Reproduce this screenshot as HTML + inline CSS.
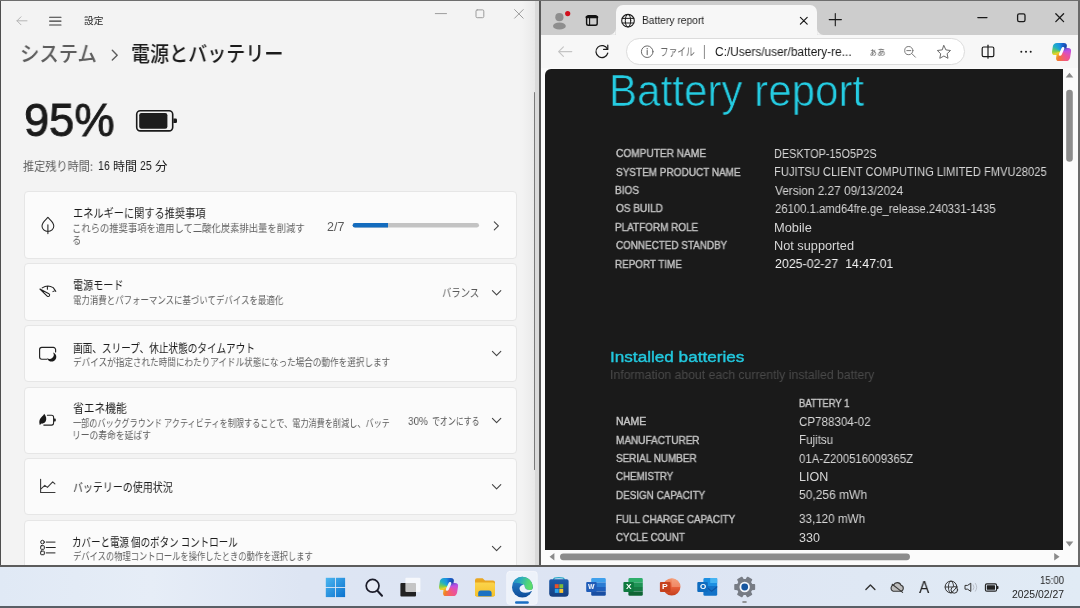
<!DOCTYPE html>
<html lang="ja">
<head>
<meta charset="utf-8">
<title>Battery report</title>
<style>
html,body{margin:0;padding:0}
body{width:1080px;height:608px;overflow:hidden;position:relative;background:#e3ebf5;font-family:"Liberation Sans","Noto Sans CJK JP",sans-serif}
.a{position:absolute}
.t{position:absolute;will-change:transform;white-space:nowrap;line-height:1;transform-origin:0 0;font-family:"Liberation Sans","Noto Sans CJK JP",sans-serif;font-weight:400}
.j{font-family:"Noto Sans CJK JP","Liberation Sans",sans-serif}
.l{font-weight:300}
.dl{font-weight:350}
.b{font-weight:700}
.sb{font-weight:400;-webkit-text-stroke:.4px currentColor}
.m{font-weight:500}
.cop{position:absolute;width:18.8px;height:17.6px;transform:skewX(-9deg)}
.cop b,.cop u{position:absolute;width:13.6px;height:12.4px;border-radius:3.6px}
.cop b{left:0;top:0;background:conic-gradient(from 0deg at 9.4px 8.8px,#1b62cc 0deg,#1746a8 35deg,#8a4fd8 62deg,#c350e0 85deg,#ea529e 125deg,#f4606a 160deg,#f07a2c 195deg,#f2b428 228deg,#e9d62a 248deg,#7ccc4e 275deg,#22b0c4 305deg,#1b92e2 335deg,#1b62cc 360deg)}
.cop u{left:5.2px;top:5.2px;background:conic-gradient(from 0deg at 4.2px 3.6px,#1b62cc 0deg,#1746a8 35deg,#8a4fd8 62deg,#c350e0 85deg,#ea529e 125deg,#f4606a 160deg,#f07a2c 195deg,#f2b428 228deg,#e9d62a 248deg,#7ccc4e 275deg,#22b0c4 305deg,#1b92e2 335deg,#1b62cc 360deg)}
.cop i{position:absolute;left:7.7px;top:4.2px;width:3.4px;height:9.2px;border-radius:1.7px;transform:rotate(16deg);background:#fbfcff}
svg{position:absolute;overflow:visible}
/* settings window */
#set{left:0;top:0;width:539px;height:566px;background:#f3f3f3}
.card{position:absolute;left:23.5px;width:493px;background:#fbfbfb;border:1px solid #e6e6e6;border-radius:4px;box-sizing:border-box}
/* edge window */
#edge{left:541px;top:0;width:539px;height:566px;background:#fbfbfb}
#tool{left:0;top:34.7px;width:539px;height:33.8px;background:#f7f7f7}
#tabbar{left:0;top:0;width:539px;height:34.7px;background:#cdcdcd}
#tab{left:74.6px;top:5.3px;width:201.6px;height:30px;background:#f7f7f7;border-radius:7px 7px 0 0}
#addr{left:84.6px;top:38.4px;width:339px;height:26.6px;background:#fff;border:1px solid #dcdcdc;border-radius:13.3px;box-sizing:border-box}
#page{left:4px;top:68.5px;width:517.7px;height:481px;background:#1a1a1a;border-radius:6px 0 0 0;overflow:hidden}
/* taskbar */
#task{left:0;top:567px;width:1080px;height:41px;background:linear-gradient(90deg,#e0e9f5 0%,#e6edf7 14%,#dde5f3 28%,#dde4f3 60%,#dfe8f4 80%,#e1ebf5 100%)}
</style>
</head>
<body>

<!-- ================= SETTINGS WINDOW ================= -->
<div id="set" class="a">
  <div class="card" style="top:191px;height:68px"></div>
  <div class="card" style="top:263px;height:58px"></div>
  <div class="card" style="top:324.5px;height:57.5px"></div>
  <div class="card" style="top:386.5px;height:67px"></div>
  <div class="card" style="top:457.5px;height:57px"></div>
  <div class="card" style="top:519.5px;height:60px"></div>
  <!-- scrollbar -->
  <div class="a" style="left:522px;top:0;width:13px;height:566px;background:linear-gradient(90deg,#f3f3f3,#e9e9e9)"></div>
  <div class="a" style="left:535px;top:0;width:4px;height:566px;background:#dadada"></div>
  <div class="a" style="left:533.5px;top:92px;width:1.7px;height:378px;background:#7a7a7a;border-radius:1px"></div>
</div>

<!-- settings icons -->
<svg class="a" style="left:0;top:0" width="540" height="567" viewBox="0 0 540 567" fill="none" stroke-linecap="round" stroke-linejoin="round">
  <!-- back arrow (disabled) -->
  <path d="M17 20.8H27M21 16.8L17 20.8L21 24.8" stroke="#b4b4b4" stroke-width="1"/>
  <!-- hamburger -->
  <path d="M49.6 17.2H61M49.6 21.1H61M49.6 25H61" stroke="#3a3a3a" stroke-width="1.1"/>
  <!-- window controls -->
  <path d="M435.3 13.6H446.5" stroke="#9c9c9c" stroke-width="1"/>
  <rect x="476" y="9.9" width="7.8" height="7.8" rx="1.2" stroke="#9c9c9c" stroke-width="1"/>
  <path d="M514.6 9.6L523.2 18.2M523.2 9.6L514.6 18.2" stroke="#9c9c9c" stroke-width="1"/>
  <!-- breadcrumb chevron -->
  <path d="M112.3 50.3L117.2 55.2L112.3 60.1" stroke="#5d5d5d" stroke-width="1.4"/>
  <!-- big battery -->
  <rect x="136.7" y="110.7" width="36" height="20.2" rx="3.6" stroke="#1a1a1a" stroke-width="1.6"/>
  <rect x="139.2" y="113.1" width="28.2" height="15.6" rx="2.2" fill="#1d1d1d"/>
  <path d="M173.4 118.6h2.4a1.2 1.2 0 0 1 1.2 1.2v2a1.2 1.2 0 0 1 -1.2 1.2h-2.4z" fill="#1a1a1a"/>
  <!-- progress bar -->
  <rect x="352.6" y="223" width="126.4" height="4.6" rx="2.3" fill="#c3c3c3"/>
  <path d="M355 223H388V227.6H355a2.3 2.3 0 0 1 0 -4.6z" fill="#146cbe"/>
  <!-- chevrons -->
  <path d="M494.3 221.8L498.4 225.8L494.3 229.8" stroke="#444" stroke-width="1.1"/>
  <path d="M492.4 290.6L496.6 294.8L500.8 290.6" stroke="#444" stroke-width="1.1"/>
  <path d="M492.4 351.4L496.6 355.6L500.8 351.4" stroke="#444" stroke-width="1.1"/>
  <path d="M492.4 418.4L496.6 422.6L500.8 418.4" stroke="#444" stroke-width="1.1"/>
  <path d="M492.4 484.6L496.6 488.8L500.8 484.6" stroke="#444" stroke-width="1.1"/>
  <path d="M492.4 546.4L496.6 550.6L500.8 546.4" stroke="#444" stroke-width="1.1"/>
  <!-- leaf -->
  <path d="M47.9 217.4C45.6 219.8 42 222.4 42 226a5.9 5.6 0 0 0 11.8 0C53.8 222.4 50.2 219.8 47.9 217.4ZM47.9 224.7V233.6" stroke="#222" stroke-width="1.05"/>
  <!-- power mode gauge -->
  <path d="M42.2 287.9Q47.6 284.3 53.2 287.6L55.8 291.4M47.4 286.3V289.3M52.9 291.6L55.2 290.4" stroke="#222" stroke-width="1.05"/>
  <path d="M39.9 289L48.9 293.7A1.5 1.5 0 0 1 47.4 296.3Z" stroke="#222" stroke-width="1.05"/>
  <!-- screen + moon -->
  <path d="M47 359.2H41.8A2.2 2.2 0 0 1 39.6 357V349.6A2.2 2.2 0 0 1 41.8 347.4H53.4A2.2 2.2 0 0 1 55.6 349.6V352" stroke="#222" stroke-width="1.15"/>
  <path d="M53.03 352.42A4.7 4.7 0 1 1 47.06 358.12A4.2 4.2 0 0 0 53.03 352.42Z" fill="#1a1a1a"/>
  <!-- battery saver -->
  <path d="M47.4 415.3H51.6A2 2 0 0 1 53.6 417.3V423.1A2 2 0 0 1 51.6 425.1H43.8" stroke="#222" stroke-width="1.1"/>
  <path d="M54 418.6h1a.8.8 0 0 1 .8.8v1.4a.8.8 0 0 1 -.8.8h-1z" fill="#222"/>
  <path d="M44.2 413.8C46.4 416.2 46.8 419.4 45.6 421.6C44.6 423.4 42.4 423.8 41.2 423.6L40 425L39.6 424.4C38.8 421.4 39.6 418.6 42 416.6C43 415.8 43.8 414.8 44.2 413.8Z" fill="#1a1a1a"/>
  <!-- chart -->
  <path d="M40.6 479.3V492.5H55M41.3 488.6L44.8 485.4L47.4 487.4L52.7 481.8L54.9 483.9" stroke="#3a3a3a" stroke-width="1.1"/>
  <!-- list -->
  <circle cx="42.5" cy="542.1" r="1.8" stroke="#222" stroke-width="1"/>
  <rect x="40.7" y="545.7" width="3.6" height="3.6" rx=".6" stroke="#222" stroke-width="1"/>
  <rect x="40.7" y="551.1" width="3.6" height="3.6" rx=".6" stroke="#222" stroke-width="1"/>
  <path d="M46.2 542.1H55M46.2 547.5H55.3M46.2 552.9H55" stroke="#222" stroke-width="1"/>
</svg>

<!-- window borders -->
<div class="a" style="left:0;top:0;width:1.4px;height:566px;background:#4e4e4e"></div>
<div class="a" style="left:539px;top:0;width:2px;height:566px;background:#585858"></div>

<!-- ================= EDGE WINDOW ================= -->
<div id="edge" class="a">
  <div id="tabbar" class="a"></div>
  <div id="tool" class="a"></div>
  <div id="tab" class="a"></div>
  <div id="addr" class="a"></div>
  <div id="page" class="a"></div>
</div>

<!-- edge chrome icons -->
<svg class="a" style="left:0;top:0" width="1080" height="567" viewBox="0 0 1080 567" fill="none" stroke-linecap="round" stroke-linejoin="round">
  <defs>
    <linearGradient id="cp1" x1="0" y1="0" x2="1" y2="1"><stop offset="0" stop-color="#1aa2e6"/><stop offset=".45" stop-color="#1f6fd8"/><stop offset="1" stop-color="#3a4fc0"/></linearGradient>
    <linearGradient id="cp2" x1="0" y1="0" x2="0" y2="1"><stop offset="0" stop-color="#23b7c8"/><stop offset=".5" stop-color="#7ccf4e"/><stop offset="1" stop-color="#f6c62e"/></linearGradient>
    <linearGradient id="cp3" x1="1" y1="0" x2="0" y2="1"><stop offset="0" stop-color="#b356e0"/><stop offset=".5" stop-color="#f0568e"/><stop offset="1" stop-color="#f2742e"/></linearGradient>
  </defs>
  <!-- tab flares -->
  <path d="M609.6 34.7H615.6V28.7A6 6 0 0 1 609.6 34.7Z" fill="#f7f7f7"/>
  <path d="M823.2 34.7H817.2V28.7A6 6 0 0 0 823.2 34.7Z" fill="#f7f7f7"/>
  <!-- profile -->
  <circle cx="559.4" cy="17.2" r="4.1" fill="#8e8e8e"/>
  <ellipse cx="559.4" cy="26" rx="6.4" ry="3.6" fill="#8e8e8e"/>
  <circle cx="567.7" cy="13.6" r="2.6" fill="#d20f1c"/>
  <!-- tab actions -->
  <rect x="586.6" y="15.6" width="10.6" height="9.6" rx="1.8" stroke="#111" stroke-width="1.4"/>
  <path d="M586.6 17.2H597.2" stroke="#111" stroke-width="2.2"/>
  <path d="M589.6 18V25" stroke="#111" stroke-width="1.1"/>
  <!-- globe -->
  <circle cx="628" cy="20.7" r="6.3" stroke="#1a1a1a" stroke-width="1.1"/>
  <ellipse cx="628" cy="20.7" rx="2.7" ry="6.3" stroke="#1a1a1a" stroke-width="1"/>
  <path d="M622.2 18.4H633.8M622.2 23H633.8" stroke="#1a1a1a" stroke-width="1"/>
  <!-- tab close, new tab -->
  <path d="M800.4 17.4L807.2 24.2M807.2 17.4L800.4 24.2" stroke="#1a1a1a" stroke-width="1.2"/>
  <path d="M829.2 19.6H841.4M835.3 13.5V25.7" stroke="#1a1a1a" stroke-width="1.1"/>
  <!-- window controls -->
  <path d="M977.8 17.6H987" stroke="#1a1a1a" stroke-width="1.2"/>
  <rect x="1017.6" y="13.8" width="7.4" height="7.8" rx="1.6" stroke="#1a1a1a" stroke-width="1.3"/>
  <path d="M1055.8 13.8L1063.6 21.6M1063.6 13.8L1055.8 21.6" stroke="#1a1a1a" stroke-width="1.3"/>
  <!-- back (disabled) -->
  <path d="M558.6 51.6H571.8M563.4 46.8L558.6 51.6L563.4 56.4" stroke="#c4c4c4" stroke-width="1.1"/>
  <!-- refresh -->
  <path d="M607.4 49A6 6 0 1 0 607.8 53" stroke="#1a1a1a" stroke-width="1.2"/>
  <path d="M607.8 45.2V49.4H603.6" stroke="#1a1a1a" stroke-width="1.2"/>
  <!-- info -->
  <circle cx="647.2" cy="51.7" r="5.8" stroke="#6a6a6a" stroke-width="1"/>
  <path d="M647.2 50.6V54.6" stroke="#6a6a6a" stroke-width="1.1"/>
  <circle cx="647.2" cy="48.8" r=".7" fill="#6a6a6a"/>
  <!-- separator -->
  <path d="M704.4 45V59" stroke="#8a8a8a" stroke-width="1" stroke-linecap="butt"/>
  <!-- zoom out -->
  <circle cx="908.8" cy="50.6" r="4.1" stroke="#7a7a7a" stroke-width="1"/>
  <path d="M911.8 53.6L915.4 57.2M906.8 50.6H910.8" stroke="#7a7a7a" stroke-width="1"/>
  <!-- star -->
  <path d="M943.9 45.6L945.9 49.9L950.5 50.5L947.1 53.7L948 58.3L943.9 56L939.8 58.3L940.7 53.7L937.3 50.5L941.9 49.9Z" stroke="#6a6a6a" stroke-width="1"/>
  <!-- split screen -->
  <rect x="982.2" y="47" width="11.6" height="9.6" rx="1.4" stroke="#1a1a1a" stroke-width="1.2"/>
  <path d="M988 45.2V58.2" stroke="#1a1a1a" stroke-width="1.2"/>
  <!-- more -->
  <circle cx="1021.3" cy="51.7" r="1" fill="#1a1a1a"/><circle cx="1026" cy="51.7" r="1" fill="#1a1a1a"/><circle cx="1030.7" cy="51.7" r="1" fill="#1a1a1a"/>
  
  <!-- page scrollbars -->
  <path d="M1069.5 72.8L1073.3 77.6H1065.7Z" fill="#8a8a8a" stroke="none"/>
  <path d="M1069.5 546.4L1073.3 541.4H1065.7Z" fill="#8a8a8a" stroke="none"/>
  <rect x="1066.2" y="89.8" width="6.6" height="72" rx="3.3" fill="#8c8c8c"/>
  <path d="M549.6 556.8L554.4 553V560.6Z" fill="#8a8a8a" stroke="none"/>
  <path d="M1059.6 556.8L1054.2 553V560.6Z" fill="#8a8a8a" stroke="none"/>
  <rect x="560" y="553.4" width="350" height="6.8" rx="3.4" fill="#8c8c8c"/>
</svg>

<div class="a" style="left:1078px;top:0;width:2px;height:566px;background:#6a6a6a"></div>
<div class="a" style="left:0;top:0;width:1080px;height:1.2px;background:#6e6e6e"></div>
<div class="a" style="left:0;top:565.3px;width:1080px;height:1.8px;background:#5c5c5c"></div>

<!-- ================= TASKBAR ================= -->
<div id="task" class="a"></div>

<!-- taskbar icons -->
<svg class="a" style="left:0;top:567px" width="1080" height="41" viewBox="0 567 1080 41" fill="none" stroke-linecap="round" stroke-linejoin="round">
  <defs>
    <linearGradient id="wn" gradientUnits="userSpaceOnUse" x1="325.8" y1="577.8" x2="345.1" y2="597.1"><stop offset="0" stop-color="#4cb6f0"/><stop offset="1" stop-color="#0b72ce"/></linearGradient>
    <linearGradient id="tv" x1="0" y1="0" x2="0" y2="1"><stop offset="0" stop-color="#fdfdfd"/><stop offset=".45" stop-color="#e4e4e0"/><stop offset="1" stop-color="#a9a9a4"/></linearGradient>
    <linearGradient id="ca" x1="0" y1="0" x2="0" y2="1"><stop offset="0" stop-color="#1d7fe0"/><stop offset=".38" stop-color="#1aa0d8"/><stop offset=".6" stop-color="#5cc070"/><stop offset="1" stop-color="#f0d020"/></linearGradient>
    <linearGradient id="cb" x1="0" y1="0" x2="0" y2="1"><stop offset="0" stop-color="#b050e8"/><stop offset=".45" stop-color="#e858a8"/><stop offset=".75" stop-color="#f4605c"/><stop offset="1" stop-color="#e8702a"/></linearGradient>
    <linearGradient id="cc" x1="0" y1="0" x2="1" y2="0"><stop offset="0" stop-color="#1a9ae6"/><stop offset="1" stop-color="#1848b0"/></linearGradient>
    <linearGradient id="fo" x1="0" y1="0" x2="0" y2="1"><stop offset="0" stop-color="#fbd44c"/><stop offset="1" stop-color="#f5c12a"/></linearGradient>
    <linearGradient id="eg" x1="0" y1="0" x2="0" y2="1"><stop offset="0" stop-color="#2a8ad0"/><stop offset="1" stop-color="#0d4a98"/></linearGradient>
    <linearGradient id="eg2" x1="0" y1="0" x2="1" y2="0.25"><stop offset="0" stop-color="#1f86cc"/><stop offset=".45" stop-color="#2fb0b8"/><stop offset=".8" stop-color="#4fd47a"/><stop offset="1" stop-color="#5cdc6c"/></linearGradient>
    <linearGradient id="st" x1="0" y1="0" x2="0" y2="1"><stop offset="0" stop-color="#1d5bab"/><stop offset="1" stop-color="#153e7e"/></linearGradient>
    <linearGradient id="pp" x1="0" y1="0" x2="0" y2="1"><stop offset="0" stop-color="#f49a72"/><stop offset=".5" stop-color="#e8603a"/><stop offset="1" stop-color="#c43e1c"/></linearGradient>
  </defs>
  <!-- windows -->
  <rect x="325.8" y="577.8" width="9.2" height="9.2" fill="url(#wn)"/><rect x="335.9" y="577.8" width="9.2" height="9.2" fill="url(#wn)"/>
  <rect x="325.8" y="587.9" width="9.2" height="9.2" fill="url(#wn)"/><rect x="335.9" y="587.9" width="9.2" height="9.2" fill="url(#wn)"/>
  <!-- search -->
  <circle cx="372.6" cy="585.8" r="6.4" stroke="#1c1d2a" stroke-width="1.7" fill="#e6eaf4"/>
  <path d="M377.4 590.8L382 595.7" stroke="#1c1d2a" stroke-width="2"/>
  <!-- task view -->
  <rect x="400.4" y="583" width="15.6" height="13.4" rx="1" fill="#222"/>
  <rect x="405.4" y="577.8" width="15" height="14.1" rx="1" fill="#fff" fill-opacity=".74"/>
  <!-- copilot -->
  
  <!-- explorer -->
  <path d="M475 580.2Q475 578.2 477 578.2H482.6L485 580.6H493Q495 580.6 495 582.6V594.4Q495 596.4 493 596.4H477Q475 596.4 475 594.4Z" fill="#e9a620"/>
  <path d="M475 582.4H493Q495 582.4 495 584.4V594.4Q495 596.4 493 596.4H477Q475 596.4 475 594.4Z" fill="url(#fo)"/>
  <path d="M478.2 596.2V593.2Q478.2 590.6 480.8 590.6H489Q491.6 590.6 491.6 593.2V596.2Z" fill="#1b72c2"/>
  <!-- edge highlight -->
  <rect x="506.8" y="571.4" width="30.4" height="33" rx="3" fill="#edf2fa" stroke="#f6f8fc" stroke-width=".8"/>
  <circle cx="522.4" cy="587.2" r="10.4" fill="url(#eg)"/>
  <path d="M512.8 583.2A10.4 10.4 0 0 1 532.7 588.7Q532.6 590.2 529.4 590.0Q524.9 589.6 524.6 586.2Q524.4 584.6 523.4 584.6Q517.4 581.6 512.8 583.2Z" fill="url(#eg2)"/>
  <path d="M523.6 584.5Q519.5 585.7 519.5 588.7Q520.1 592.7 525.4 592.7Q529.6 592.5 531.4 591.0L533.4 592.8L533.6 588.8L532.7 588.7Q532.6 590.2 529.4 590.0Q524.9 589.6 524.6 586.2Q524.4 584.6 523.6 584.5Z" fill="#edf2fa"/>
  <rect x="515" y="601.2" width="13.8" height="2.5" rx="1.2" fill="#1a6dc2"/>
  <!-- store -->
  <path d="M553.6 579.4Q553.6 577.6 558.9 577.6Q564.2 577.6 564.2 579.4" stroke="#2aa8c8" stroke-width="1.2"/>
  <path d="M549.2 581Q549.2 579.2 551 579.2H566.8Q568.6 579.2 568.6 581V593.2Q568.6 596.8 565 596.8H552.8Q549.2 596.8 549.2 593.2Z" fill="url(#st)"/>
  <rect x="554.8" y="584.2" width="3.9" height="4" fill="#ea5228"/><rect x="559.3" y="584.2" width="3.9" height="4" fill="#7dbb38"/>
  <rect x="554.8" y="588.9" width="3.9" height="4" fill="#2aa2ea"/><rect x="559.3" y="588.9" width="3.9" height="4" fill="#f8c232"/>
  <!-- word -->
  <path d="M591.2 579.4Q591.2 578 592.6 578H604.4Q605.8 578 605.8 579.4V582.5H591.2Z" fill="#3fa0ec"/>
  <rect x="591.2" y="582.5" width="14.6" height="4.5" fill="#2b7cd3"/><rect x="591.2" y="587" width="14.6" height="4.4" fill="#1f60bc"/>
  <path d="M591.2 591.4H605.8V594.4Q605.8 595.8 604.4 595.8H592.6Q591.2 595.8 591.2 594.4Z" fill="#194ea2"/>
  <rect x="586.2" y="581.9" width="10.5" height="10" rx="1" fill="#1f5cb8"/>
  <!-- excel -->
  <path d="M628.4 579.4Q628.4 578 629.8 578H641.4Q642.8 578 642.8 579.4V582.5H628.4Z" fill="#2fae6a"/>
  <rect x="628.4" y="582.5" width="14.4" height="4.5" fill="#1f9455"/><rect x="628.4" y="587" width="14.4" height="4.4" fill="#167c44"/>
  <path d="M628.4 591.4H642.8V594.4Q642.8 595.8 641.4 595.8H629.8Q628.4 595.8 628.4 594.4Z" fill="#0f6534"/>
  <rect x="623.4" y="581.9" width="10.5" height="10" rx="1" fill="#0f7a40"/>
  <!-- powerpoint -->
  <circle cx="671.7" cy="586.9" r="8.7" fill="url(#pp)"/>
  <path d="M671.7 578.2A8.7 8.7 0 0 1 680.4 586.9H671.7Z" fill="#f6a786" opacity=".55"/>
  <rect x="659.9" y="581.9" width="10.6" height="10" rx="1" fill="#c6411d"/>
  <!-- outlook -->
  <path d="M703.4 579.4Q703.4 578 704.8 578H715.8Q717.2 578 717.2 579.4V586H703.4Z" fill="#1b8fe2"/>
  <rect x="710.2" y="578" width="7" height="5" fill="#46b4f2"/>
  <path d="M703.4 586H717.2V594.4Q717.2 595.8 715.8 595.8H704.8Q703.4 595.8 703.4 594.4Z" fill="#1272c8"/>
  <path d="M706 586L711.6 590.4L717.2 586V587.4L711.6 592L706 587.4Z" fill="#0d56a6"/>
  <rect x="697.3" y="581.9" width="10.5" height="10" rx="1" fill="#0f6cbf"/>
  <!-- settings gear -->
  <g transform="translate(744.7 587)">
    <path d="M6.90 -2.38L9.65 -2.23L9.65 2.23L6.90 2.38L5.51 4.79L6.75 7.24L2.89 9.47L1.39 7.17L-1.39 7.17L-2.89 9.47L-6.75 7.24L-5.51 4.79L-6.90 2.38L-9.65 2.23L-9.65 -2.23L-6.90 -2.38L-5.51 -4.79L-6.75 -7.24L-2.89 -9.47L-1.39 -7.17L1.39 -7.17L2.89 -9.47L6.75 -7.24L5.51 -4.79Z" fill="#777c85" stroke="#777c85" stroke-width="1.6" stroke-linejoin="round"/>
    <circle r="7.4" fill="#777c85"/>
    <circle r="5.2" fill="#f4f7fc"/><circle r="3.4" fill="#17569f"/>
  </g>
  <rect x="742.2" y="601.2" width="4.6" height="1.6" rx=".8" fill="#7a7a7a"/>
  <!-- tray -->
  <path d="M865.9 589.4L870.4 584.9L874.9 589.4" stroke="#333" stroke-width="1.4"/>
  <path d="M893.2 591.2H900.6A3 3 0 0 0 901 585.3A4 4 0 0 0 893.6 584.9A3.3 3.3 0 0 0 893.2 591.2Z" fill="#bdbdbd" stroke="#383838" stroke-width="1.1"/>
  <path d="M892.2 584.3L902.6 592.4" stroke="#383838" stroke-width="1.1"/>
  <circle cx="951" cy="587" r="5.9" stroke="#333" stroke-width="1"/>
  <ellipse cx="951" cy="587" rx="2.6" ry="5.9" stroke="#333" stroke-width=".9"/>
  <path d="M945.2 587H956.8" stroke="#333" stroke-width=".9"/>
  <circle cx="954.3" cy="589.9" r="3.3" fill="#e0e9f4" stroke="#333" stroke-width="1"/>
  <path d="M952.2 592.2L956.4 587.6" stroke="#333" stroke-width="1"/>
  <path d="M965.4 585.4H967.6L970.8 583.2V591.4L967.6 589.2H965.4Z" stroke="#333" stroke-width="1"/>
  <path d="M973.2 584.8Q975 587.3 973.2 589.8M975.4 583.4Q978.2 587.3 975.4 591.2" stroke="#b4bac4" stroke-width=".9"/>
  <rect x="985.4" y="583.9" width="11.2" height="7.2" rx="1.4" stroke="#222" stroke-width="1.1"/>
  <rect x="986.8" y="585.2" width="8.2" height="4.6" rx=".5" fill="#222"/>
  <path d="M997 586h.8a.7.7 0 0 1 .7.7v1.6a.7.7 0 0 1 -.7.7h-.8z" fill="#222"/>
</svg>
<span class="t b" style="left:588.00px;top:582.65px;font-size:8px;color:#fff;transform:scaleX(0.8533);">W</span>
<span class="t b" style="left:626.00px;top:582.65px;font-size:8px;color:#fff;transform:scaleX(1.0400);">X</span>
<span class="t b" style="left:662.00px;top:582.65px;font-size:8px;color:#fff;transform:scaleX(1.0667);">P</span>
<span class="t b" style="left:700.00px;top:582.65px;font-size:8px;color:#fff;transform:scaleX(0.9391);">O</span>

<div class="a" style="left:0;top:606px;width:1080px;height:2px;background:#5a5f66"></div>


<!-- settings text -->
<span class="t j" style="left:84.00px;top:16.43px;font-size:9.5px;color:#2a2a2a;transform:scaleX(1.0192);">設定</span>
<span class="t j m" style="left:20.00px;top:42.30px;font-size:21px;color:#5d5d5d;transform:scaleX(0.9225);">システム</span>
<span class="t j m" style="left:131.00px;top:41.88px;font-size:21px;color:#1b1b1b;transform:scaleX(0.9070);">電源とバッテリー</span>
<span class="t" style="left:24.00px;top:97.42px;font-size:46.5px;color:#1a1a1a;transform:scaleX(0.9729);-webkit-text-stroke:0.9px #1a1a1a;">95%</span>
<span class="t j" style="left:23.00px;top:159.62px;font-size:12px;color:#5f5f5f;transform:scaleX(0.9279);">推定残り時間:</span>
<span class="t" style="left:98.00px;top:160.25px;font-size:12.5px;color:#1c1c1c;transform:scaleX(0.8490);">16</span>
<span class="t j" style="left:113.00px;top:159.50px;font-size:12px;color:#1c1c1c;transform:scaleX(0.9818);">時間</span>
<span class="t" style="left:140.00px;top:160.25px;font-size:12.5px;color:#1c1c1c;transform:scaleX(0.8314);">25</span>
<span class="t j" style="left:155.00px;top:160.38px;font-size:12px;color:#1c1c1c;transform:scaleX(1.0455);">分</span>

<span class="t j" style="left:73.00px;top:206.93px;font-size:12px;color:#1c1c1c;transform:scaleX(0.8491);">エネルギーに関する推奨事項</span>
<span class="t j" style="left:72.00px;top:222.88px;font-size:10.5px;color:#606060;transform:scaleX(0.8870);">これらの推奨事項を適用して二酸化炭素排出量を削減す</span>
<span class="t j" style="left:72.00px;top:235.25px;font-size:10.5px;color:#606060;transform:scaleX(0.8903);">る</span>
<span class="t" style="left:327.00px;top:220.68px;font-size:12.5px;color:#5a5a5a;transform:scaleX(0.9723);">2/7</span>

<span class="t j" style="left:73.00px;top:279.00px;font-size:12px;color:#1c1c1c;transform:scaleX(0.8402);">電源モード</span>
<span class="t j" style="left:73.00px;top:295.32px;font-size:10.5px;color:#606060;transform:scaleX(0.8031);">電力消費とパフォーマンスに基づいてデバイスを最適化</span>
<span class="t j" style="left:442.00px;top:287.18px;font-size:11.5px;color:#5a5a5a;transform:scaleX(0.8114);">バランス</span>

<span class="t j" style="left:73.00px;top:342.00px;font-size:12px;color:#1c1c1c;transform:scaleX(0.8022);">画面、スリープ、休止状態のタイムアウト</span>
<span class="t j" style="left:73.00px;top:357.20px;font-size:10.5px;color:#606060;transform:scaleX(0.8179);">デバイスが指定された時間にわたりアイドル状態になった場合の動作を選択します</span>

<span class="t j" style="left:73.00px;top:401.50px;font-size:12px;color:#1c1c1c;transform:scaleX(0.8949);">省エネ機能</span>
<span class="t j" style="left:73.00px;top:418.18px;font-size:10.5px;color:#606060;transform:scaleX(0.7747);">一部のバックグラウンド アクティビティを制限することで、電力消費を削減し、バッテ</span>
<span class="t j" style="left:72.00px;top:429.88px;font-size:10.5px;color:#606060;transform:scaleX(0.8350);">リーの寿命を延ばす</span>
<span class="t" style="left:408.00px;top:415.77px;font-size:11.5px;color:#5a5a5a;transform:scaleX(0.8629);">30%</span>
<span class="t j" style="left:432.00px;top:415.77px;font-size:10.5px;color:#5a5a5a;transform:scaleX(0.7539);">でオンにする</span>

<span class="t j" style="left:73.00px;top:480.80px;font-size:12px;color:#1c1c1c;transform:scaleX(0.8303);">バッテリーの使用状況</span>

<span class="t j" style="left:72.00px;top:535.80px;font-size:12px;color:#1c1c1c;transform:scaleX(0.7908);">カバーと電源 個のボタン コントロール</span>
<span class="t j" style="left:73.00px;top:550.60px;font-size:10.5px;color:#606060;transform:scaleX(0.7881);">デバイスの物理コントロールを操作したときの動作を選択します</span>


<!-- edge chrome text -->
<span class="t" style="left:642.00px;top:14.90px;font-size:11px;color:#1e1e1e;transform:scaleX(0.9328);">Battery report</span>
<span class="t j" style="left:660.00px;top:46.48px;font-size:11px;color:#666;transform:scaleX(0.7857);">ファイル</span>
<span class="t" style="left:715.00px;top:46.40px;font-size:12px;color:#1a1a1a;transform:scaleX(0.9897);">C:/Users/user/battery-re...</span>
<span class="t j" style="left:869.00px;top:47.12px;font-size:8.5px;color:#555;transform:scaleX(0.9695);">ぁあ</span>

<!-- battery report page text -->
<span class="t" style="left:609.00px;top:69.20px;font-size:44.5px;color:#25cce2;transform:scaleX(0.9464);-webkit-text-stroke:0.7px #1a1a1a;">Battery report</span>

<span class="t sb" style="left:616.00px;top:149.25px;font-size:10.4px;color:#c4c4c4;transform:scaleX(0.9750);">COMPUTER NAME</span>
<span class="t sb" style="left:616.00px;top:167.65px;font-size:10.4px;color:#c4c4c4;transform:scaleX(0.9609);">SYSTEM PRODUCT NAME</span>
<span class="t sb" style="left:615.00px;top:186.05px;font-size:10.4px;color:#c4c4c4;transform:scaleX(0.9642);">BIOS</span>
<span class="t sb" style="left:616.00px;top:204.45px;font-size:10.4px;color:#c4c4c4;transform:scaleX(0.9667);">OS BUILD</span>
<span class="t sb" style="left:615.00px;top:222.85px;font-size:10.4px;color:#c4c4c4;transform:scaleX(0.9558);">PLATFORM ROLE</span>
<span class="t sb" style="left:616.00px;top:241.25px;font-size:10.4px;color:#c4c4c4;transform:scaleX(0.9499);">CONNECTED STANDBY</span>
<span class="t sb" style="left:615.00px;top:259.65px;font-size:10.4px;color:#c4c4c4;transform:scaleX(0.9496);">REPORT TIME</span>

<span class="t" style="left:774.00px;top:148.00px;font-size:12.5px;color:#d6d6d6;transform:scaleX(0.8705);">DESKTOP-15O5P2S</span>
<span class="t" style="left:774.00px;top:166.40px;font-size:12.5px;color:#d6d6d6;transform:scaleX(0.8928);">FUJITSU CLIENT COMPUTING LIMITED FMVU28025</span>
<span class="t" style="left:775.00px;top:184.80px;font-size:12.5px;color:#d6d6d6;transform:scaleX(0.9459);">Version 2.27 09/13/2024</span>
<span class="t" style="left:775.00px;top:203.20px;font-size:12.5px;color:#d6d6d6;transform:scaleX(0.9041);">26100.1.amd64fre.ge_release.240331-1435</span>
<span class="t" style="left:774.00px;top:221.60px;font-size:12.5px;color:#d6d6d6;transform:scaleX(1.0270);">Mobile</span>
<span class="t" style="left:774.00px;top:240.00px;font-size:12.5px;color:#d6d6d6;transform:scaleX(1.0189);">Not supported</span>
<span class="t" style="left:775.00px;top:258.40px;font-size:12.5px;color:#f2f2f2;transform:scaleX(0.9890);white-space:pre;">2025-02-27  14:47:01</span>

<span class="t sb" style="left:610.00px;top:349.35px;font-size:15.5px;color:#22c8de;transform:scaleX(1.1058);">Installed batteries</span>
<span class="t" style="left:610.00px;top:369.00px;font-size:12.5px;color:#4a4a4a;transform:scaleX(0.9781);">Information about each currently installed battery</span>
<span class="t sb" style="left:799.00px;top:399.05px;font-size:10.4px;color:#c8c8c8;transform:scaleX(0.9083);">BATTERY 1</span>

<span class="t sb" style="left:616.00px;top:417.35px;font-size:10.4px;color:#c4c4c4;transform:scaleX(1.0103);">NAME</span>
<span class="t sb" style="left:616.00px;top:435.65px;font-size:10.4px;color:#c4c4c4;transform:scaleX(0.9649);">MANUFACTURER</span>
<span class="t sb" style="left:616.00px;top:453.95px;font-size:10.4px;color:#c4c4c4;transform:scaleX(0.9548);">SERIAL NUMBER</span>
<span class="t sb" style="left:616.00px;top:472.25px;font-size:10.4px;color:#c4c4c4;transform:scaleX(0.9383);">CHEMISTRY</span>
<span class="t sb" style="left:616.00px;top:490.65px;font-size:10.4px;color:#c4c4c4;transform:scaleX(0.9491);">DESIGN CAPACITY</span>
<span class="t sb" style="left:616.00px;top:514.75px;font-size:10.4px;color:#c4c4c4;transform:scaleX(0.9423);">FULL CHARGE CAPACITY</span>
<span class="t sb" style="left:616.00px;top:533.25px;font-size:10.4px;color:#c4c4c4;transform:scaleX(0.9226);">CYCLE COUNT</span>

<span class="t" style="left:799.00px;top:416.00px;font-size:12.5px;color:#d6d6d6;transform:scaleX(0.9281);">CP788304-02</span>
<span class="t" style="left:799.00px;top:434.30px;font-size:12.5px;color:#d6d6d6;transform:scaleX(0.9286);">Fujitsu</span>
<span class="t" style="left:799.00px;top:452.60px;font-size:12.5px;color:#d6d6d6;transform:scaleX(0.9119);">01A-Z200516009365Z</span>
<span class="t" style="left:799.00px;top:470.90px;font-size:12.5px;color:#d6d6d6;transform:scaleX(0.9835);">LION</span>
<span class="t" style="left:799.00px;top:489.30px;font-size:12.5px;color:#d6d6d6;transform:scaleX(0.9612);">50,256 mWh</span>
<span class="t" style="left:799.00px;top:513.40px;font-size:12.5px;color:#d6d6d6;transform:scaleX(0.9324);">33,120 mWh</span>
<span class="t" style="left:799.00px;top:531.90px;font-size:12.5px;color:#d6d6d6;transform:scaleX(0.9772);">330</span>

<!-- clock -->
<span class="t" style="left:1040.00px;top:576.00px;font-size:10px;color:#1f1f1f;transform:scaleX(0.9600);">15:00</span>
<span class="t" style="left:1012.00px;top:589.50px;font-size:10px;color:#1f1f1f;transform:scaleX(1.0408);">2025/02/27</span>
<span class="t" style="left:919.00px;top:579.30px;font-size:17px;color:#222;transform:scaleX(0.9067);font-weight:300;">A</span>

<div class="cop" style="left:438.5px;top:578px"><b></b><u></u><i style="background:#f1f4fb"></i></div>
<div class="cop" style="left:1051.6px;top:42.5px"><b></b><u></u><i></i></div>
<!--TEXT-->
</body>
</html>
